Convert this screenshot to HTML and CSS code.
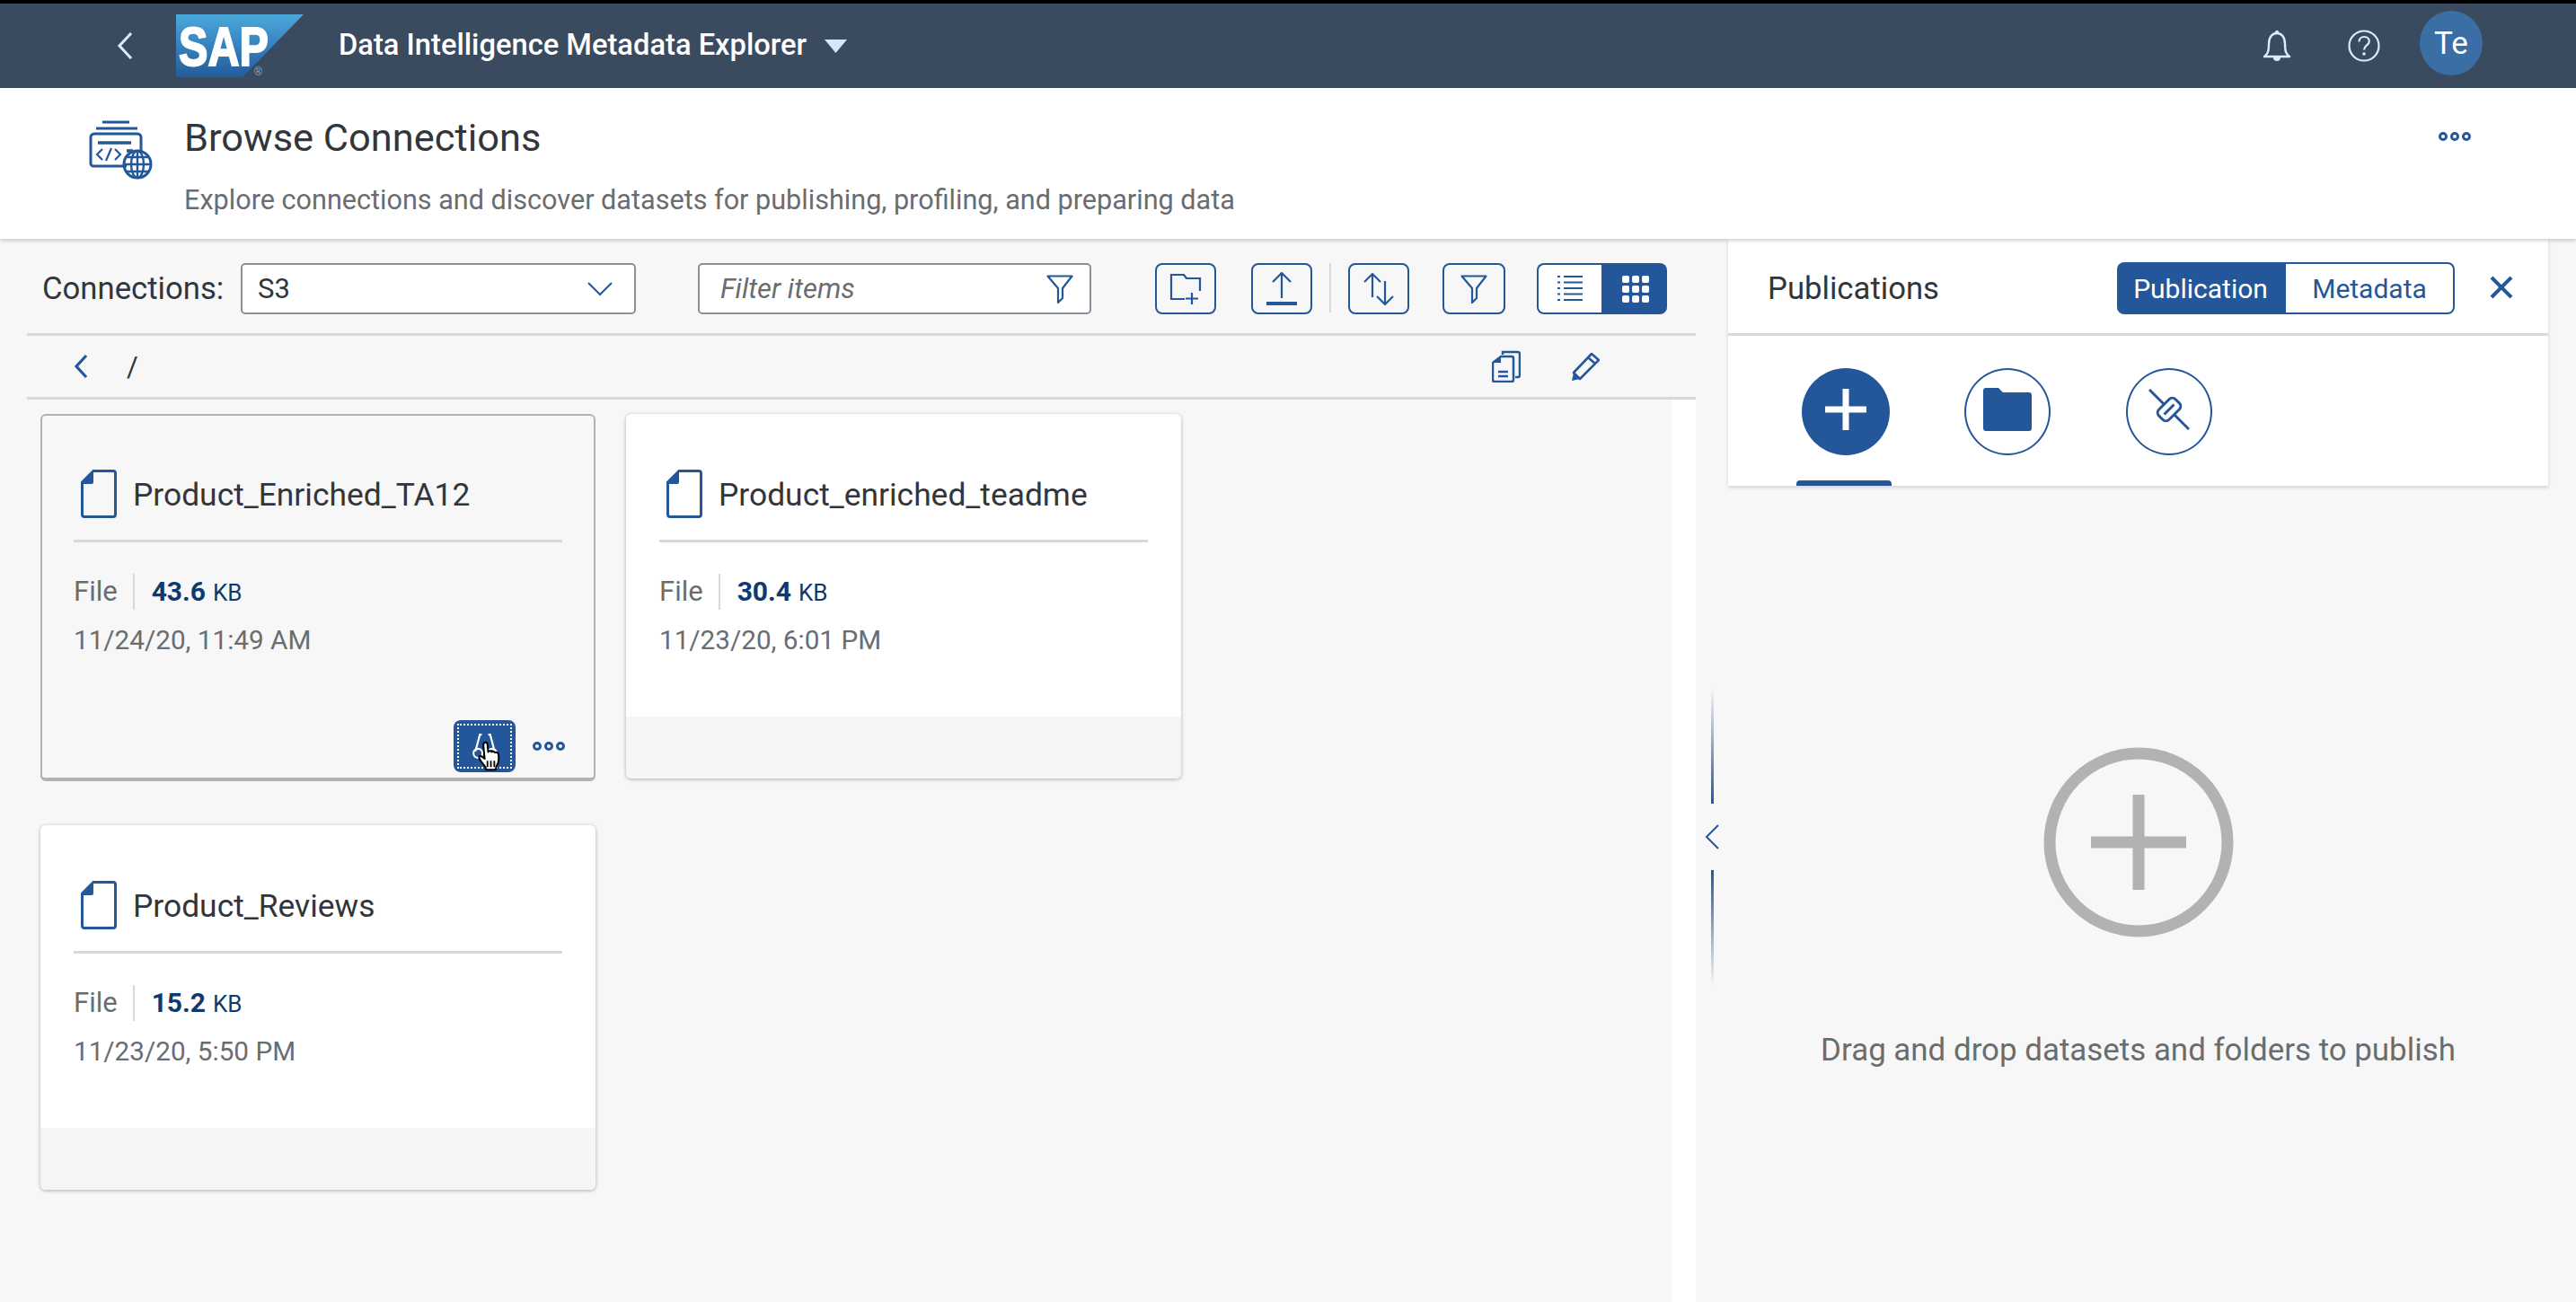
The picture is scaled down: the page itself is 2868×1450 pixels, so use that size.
FILE: index.html
```html
<!DOCTYPE html>
<html lang="en">
<head>
  <meta charset="UTF-8">
  <title>Browse Connections</title>
  <link rel="stylesheet" href="styles.css">
</head>
<body>
<header class="shell">
  <svg class="shell-back" width="18" height="30" viewBox="0 0 18 30"><path d="M16 1 3 15l13 14" fill="none" stroke="#dcecff" stroke-width="3"/></svg>
  <svg class="logo" width="142" height="70" viewBox="0 0 142 70">
    <defs>
      <linearGradient id="sapblue" x1="0" y1="0" x2="0" y2="1">
        <stop offset="0" stop-color="#4aa9dc"/>
        <stop offset="1" stop-color="#235b9c"/>
      </linearGradient>
    </defs>
    <polygon points="0,0 142,0 74,70 0,70" fill="url(#sapblue)"/>
    <text class="logo-text" x="3" y="57" textLength="100" lengthAdjust="spacingAndGlyphs">SAP</text>
    <text class="logo-mark" x="87" y="68">®</text>
  </svg>
  <span class="shell-title">Data Intelligence Metadata Explorer</span>
  <svg class="shell-caret" width="25" height="15" viewBox="0 0 25 15"><polygon points="0,0 25,0 12.5,15" fill="#d1e8ff"/></svg>
  <span class="shell-spacer"></span>
  <svg class="shell-icon" width="32" height="36" viewBox="0 0 32 36"><path d="M2 30c4-3 5-6 5-14C7 8 11 4 16 4s9 4 9 12c0 8 1 11 5 14z" fill="none" stroke="#dcecff" stroke-width="2.4" stroke-linejoin="round"/><circle cx="16" cy="2.8" r="2" fill="#dcecff"/><path d="M12 31h8a4 4 0 0 1-8 0z" fill="#dcecff"/></svg>
  <svg class="shell-icon help" width="36" height="36" viewBox="0 0 36 36"><circle cx="18" cy="18" r="16.5" fill="none" stroke="#dcecff" stroke-width="2.2"/><path d="M12.500 13.500c0-3.500 2.500-5.500 5.700-5.500 3.300 0 5.600 2 5.600 4.900 0 4.600-5.800 4.500-5.800 9.600" fill="none" stroke="#dcecff" stroke-width="2.200"/><circle cx="18" cy="27" r="1.800" fill="#dcecff"/></svg>
  <span class="avatar">Te</span>
</header>

<section class="title-bar">
  <svg class="title-icon" width="72" height="66" viewBox="0 0 72 66">
    <g fill="none" stroke="#235799" stroke-width="3">
      <path d="M15 2h30M8 9h46"/>
      <path d="M42 51H5a3 3 0 0 1-3-3V19a4 4 0 0 1 4-4h48a4 4 0 0 1 4 4v17"/>
      <path d="M10 25h37" stroke-width="3.600"/>
      <path d="M42 34h7" stroke-width="3.600"/>
      <path d="M15 32l-6 6 6 6M29 32l6 6-6 6M25 31l-6 14" stroke-width="2.200"/>
      <circle cx="54" cy="49" r="15"/>
      <ellipse cx="54" cy="49" rx="7" ry="15" stroke-width="2.400"/>
      <path d="M39 49h30M42 41h24M42 57h24M54 34v30" stroke-width="2.400"/>
    </g>
  </svg>
  <div class="title-text">
    <h1>Browse Connections</h1>
    <p>Explore connections and discover datasets for publishing, profiling, and preparing data</p>
  </div>
  <span class="dots title-dots"><i></i><i></i><i></i></span>
</section>

<main class="content">
  <section class="browser">
    <div class="toolbar">
      <label class="conn-label">Connections:</label>
      <div class="field conn-select">
        <span>S3</span>
        <svg width="28" height="16" viewBox="0 0 28 16"><path d="M1 1l13 13L27 1" fill="none" stroke="#235799" stroke-width="2"/></svg>
      </div>
      <div class="field filter">
        <span>Filter items</span>
        <svg width="30" height="32" viewBox="0 0 30 32"><path d="M1.500 1.500h27L18 15v11l-5 5V15z" fill="none" stroke="#235799" stroke-width="2.200" stroke-linejoin="round"/></svg>
      </div>
      <button class="tool first">
        <svg width="36" height="36" viewBox="0 0 36 36"><path d="M17 29H2V2h14l3 4h15v14M25 22v13M18 28.500h14" fill="none" stroke="#235799" stroke-width="2.200"/></svg>
      </button>
      <button class="tool">
        <svg width="36" height="38" viewBox="0 0 36 38"><path d="M18 29V2M8 11l10-10 10 10" fill="none" stroke="#235799" stroke-width="2.200"/><path d="M1 35h34" stroke="#235799" stroke-width="4"/></svg>
      </button>
      <span class="tool-sep"></span>
      <button class="tool">
        <svg width="38" height="38" viewBox="0 0 38 38"><path d="M12 28V2M3 11l9-9 9 9M26 10v26M17 27l9 9 9-9" fill="none" stroke="#235799" stroke-width="2.200"/></svg>
      </button>
      <button class="tool last">
        <svg width="30" height="32" viewBox="0 0 30 32"><path d="M1.500 1.500h27L18 15v11l-5 5V15z" fill="none" stroke="#235799" stroke-width="2.200" stroke-linejoin="round"/></svg>
      </button>
      <div class="view-switch">
        <button class="view-btn">
          <svg width="30" height="32" viewBox="0 0 30 32"><path d="M8 2h21M8 8.500h21M8 15h21M8 21.500h21M8 28h21" stroke="#235799" stroke-width="2.200"/><path d="M1 2h3M1 8.500h3M1 15h3M1 21.500h3M1 28h3" stroke="#235799" stroke-width="2"/></svg>
        </button>
        <button class="view-btn on">
          <svg width="30" height="30" viewBox="0 0 30 30" fill="#fff"><rect x="0" y="0" width="8" height="8" rx="2"/><rect x="11" y="0" width="8" height="8" rx="2"/><rect x="22" y="0" width="8" height="8" rx="2"/><rect x="0" y="11" width="8" height="8" rx="2"/><rect x="11" y="11" width="8" height="8" rx="2"/><rect x="22" y="11" width="8" height="8" rx="2"/><rect x="0" y="22" width="8" height="8" rx="2"/><rect x="11" y="22" width="8" height="8" rx="2"/><rect x="22" y="22" width="8" height="8" rx="2"/></svg>
        </button>
      </div>
    </div>

    <div class="crumbs">
      <svg width="16" height="28" viewBox="0 0 16 28"><path d="M14 2 3 14l11 12" fill="none" stroke="#235799" stroke-width="3.200"/></svg>
      <span class="crumb-path">/</span>
      <span class="shell-spacer"></span>
      <svg class="crumb-copy" width="32" height="36" viewBox="0 0 32 36"><g fill="none" stroke="#235799" stroke-width="2.500"><path d="M12 5V2h17a2 2 0 0 1 2 2v24a2 2 0 0 1-2 2h-3"/><path d="M10 7h12a2 2 0 0 1 2 2v24a2 2 0 0 1-2 2H3a2 2 0 0 1-2-2V14z"/><path d="M7 24h11M7 29h11"/></g><path d="M10 7v7H1z" fill="#235799"/></svg>
      <svg class="crumb-edit" width="32" height="34" viewBox="0 0 32 34"><path d="M3 24 23 3l8 7-21 21z" fill="none" stroke="#235799" stroke-width="2.600" stroke-linejoin="round"/><path d="M1 33l2-9 7 7z" fill="#235799"/><path d="M19 7l8 7" stroke="#235799" stroke-width="2.600"/></svg>
    </div>

    <div class="scroller">
      <div class="cards">
        <article class="card focused">
          <div class="card-head">
            <svg class="file-icon" width="40" height="54" viewBox="0 0 40 54"><path d="M14 1.500h22a2.500 2.500 0 0 1 2.500 2.500v46a2.500 2.500 0 0 1-2.500 2.500H4A2.500 2.500 0 0 1 1.500 50V14z" fill="none" stroke="#235799" stroke-width="3"/><path d="M14 1.500V14a2 2 0 0 1-2 2H1.500z" fill="#235799"/></svg>
            <h2>Product_Enriched_TA12</h2>
          </div>
          <div class="card-info">
            <div class="card-meta"><span class="kind">File</span><b>43.6</b><small>KB</small></div>
            <div class="card-date">11/24/20, 11:49 AM</div>
          </div>
          <div class="card-foot">
            <span class="shell-spacer"></span>
            <button class="card-action">
              <span class="focus-ring"></span>
              <svg width="30" height="32" viewBox="0 0 42 44"><g fill="none" stroke="#fff" stroke-width="3"><path d="M6 30 13 4h3M36 30 29 4h-3"/><circle cx="10" cy="33" r="7"/><circle cx="32" cy="33" r="7"/></g></svg>
              <svg class="hand" width="26" height="34" viewBox="0 0 34 44"><path d="M9 3c2-2 5-1 5 2l1 11c1-2 4-2 5 0 1-1 4-1 5 1 2-1 5 0 5 3 1 6 0 13-3 17l-1 5H12l-1-4C8 33 3 29 2 25c-1-3 2-4 4-2l4 3L8 6c0-1 0-2 1-3z" fill="#fff" stroke="#000" stroke-width="2.600" stroke-linejoin="round"/><path d="M14 29v9M19 29v9M24 29v9" stroke="#000" stroke-width="2.400"/></svg>
            </button>
            <span class="dots"><i></i><i></i><i></i></span>
          </div>
        </article>

        <article class="card">
          <div class="card-head">
            <svg class="file-icon" width="40" height="54" viewBox="0 0 40 54"><path d="M14 1.500h22a2.500 2.500 0 0 1 2.500 2.500v46a2.500 2.500 0 0 1-2.500 2.500H4A2.500 2.500 0 0 1 1.500 50V14z" fill="none" stroke="#235799" stroke-width="3"/><path d="M14 1.500V14a2 2 0 0 1-2 2H1.500z" fill="#235799"/></svg>
            <h2>Product_enriched_teadme</h2>
          </div>
          <div class="card-info">
            <div class="card-meta"><span class="kind">File</span><b>30.4</b><small>KB</small></div>
            <div class="card-date">11/23/20, 6:01 PM</div>
          </div>
          <div class="card-foot"></div>
        </article>

        <article class="card">
          <div class="card-head">
            <svg class="file-icon" width="40" height="54" viewBox="0 0 40 54"><path d="M14 1.500h22a2.500 2.500 0 0 1 2.500 2.500v46a2.500 2.500 0 0 1-2.500 2.500H4A2.500 2.500 0 0 1 1.500 50V14z" fill="none" stroke="#235799" stroke-width="3"/><path d="M14 1.500V14a2 2 0 0 1-2 2H1.500z" fill="#235799"/></svg>
            <h2>Product_Reviews</h2>
          </div>
          <div class="card-info">
            <div class="card-meta"><span class="kind">File</span><b>15.2</b><small>KB</small></div>
            <div class="card-date">11/23/20, 5:50 PM</div>
          </div>
          <div class="card-foot"></div>
        </article>
      </div>
      <div class="scroll-track"></div>
    </div>
  </section>

  <div class="splitter">
    <span class="grip grip-top"></span>
    <svg width="16" height="28" viewBox="0 0 16 28"><path d="M15 1 2 14l13 13" fill="none" stroke="#235799" stroke-width="2"/></svg>
    <span class="grip grip-bottom"></span>
  </div>

  <aside class="panel">
    <div class="panel-top">
      <div class="panel-head">
        <span class="panel-title">Publications</span>
        <span class="shell-spacer"></span>
        <div class="segments">
          <button class="segment on">Publication</button>
          <button class="segment">Metadata</button>
        </div>
        <svg class="panel-close" width="26" height="26" viewBox="0 0 26 26"><path d="M2 2l22 22M24 2 2 24" fill="none" stroke="#235799" stroke-width="4"/></svg>
      </div>
      <div class="panel-tabs">
        <div class="round-tab active">
          <span class="round solid">
            <svg width="46" height="46" viewBox="0 0 46 46"><path d="M23 0v46M0 23h46" stroke="#fff" stroke-width="7"/></svg>
          </span>
        </div>
        <div class="round-tab">
          <span class="round">
            <svg width="54" height="48" viewBox="0 0 54 48"><path d="M3 0h14l5 5h29a3 3 0 0 1 3 3v37a3 3 0 0 1-3 3H3a3 3 0 0 1-3-3V3a3 3 0 0 1 3-3z" fill="#235799"/></svg>
          </span>
        </div>
        <div class="round-tab">
          <span class="round">
            <svg width="46" height="48" viewBox="0 0 46 48"><g fill="none" stroke="#235799" stroke-width="3"><path d="M1 2l16.300 16.300M28.700 29.700 45 46"/><rect x="10" y="16" width="26" height="16" rx="5" transform="rotate(-45 23 24)"/><path d="M17.500 29.500l11-11"/></g></svg>
          </span>
        </div>
      </div>
    </div>
    <div class="empty">
      <svg width="212" height="212" viewBox="0 0 212 212"><circle cx="106" cy="106" r="99" fill="none" stroke="#b0b2b4" stroke-width="13"/><path d="M106 53v106M53 106h106" stroke="#b0b2b4" stroke-width="13"/></svg>
      <p>Drag and drop datasets and folders to publish</p>
    </div>
  </aside>
</main>
</body>
</html>
```

FILE: styles.css
```css
* {
  box-sizing: border-box;
}
html, body {
  height: 100%;
}
body {
  margin: 0;
  display: flex;
  flex-direction: column;
  overflow: hidden;
  font-family: Roboto, Arial, sans-serif;
  color: #32363a;
  background-color: #f7f7f7;
}
svg {
  display: block;
  flex: none;
}
button {
  font-family: inherit;
  padding: 0;
  cursor: pointer;
}
.shell-spacer {
  flex: 1;
}

/* shell bar */
.shell {
  height: 98px;
  border-top: 4px solid #000;
  background-color: #3a4a5f;
  display: flex;
  align-items: center;
  padding-left: 130px;
  flex: none;
}
.logo {
  margin-left: 48px;
}
.logo-text {
  font-family: "Liberation Sans", Arial, sans-serif;
  font-weight: 700;
  font-size: 62px;
  fill: #fff;
  stroke: #fff;
  stroke-width: 2px;
}
.logo-mark {
  font-family: "Liberation Sans", Arial, sans-serif;
  font-size: 12px;
  fill: #8fb4d8;
}
.shell-title {
  margin-left: 39px;
  margin-top: -3px;
  font-size: 32.7px;
  font-weight: 500;
  color: #fff;
}
.shell-caret {
  margin-left: 20px;
}
.shell-icon {
  margin-right: 63px;
}
.shell-icon.help {
  margin-right: 44px;
}
.avatar {
  width: 70px;
  height: 72px;
  margin-right: 104px;
  margin-top: -6px;
  border-radius: 50%;
  background-color: #3a6ea5;
  color: #fff;
  font-size: 35px;
  display: flex;
  align-items: center;
  justify-content: center;
}

/* title bar */
.title-bar {
  height: 168px;
  background-color: #fff;
  box-shadow: 0 2px 4px rgba(0, 0, 0, 0.18);
  display: flex;
  align-items: flex-start;
  padding: 36px 117px 0 99px;
  position: relative;
  flex: none;
}
.title-icon {
  margin-right: 34px;
}
.title-text h1 {
  margin: -6px 0 0;
  font-size: 43.4px;
  line-height: 52px;
  font-weight: 400;
}
.title-text p {
  margin: 23px 0 0;
  font-size: 30.6px;
  line-height: 40px;
  color: #6a6d70;
}
.dots {
  display: flex;
  gap: 3px;
}
.dots i {
  width: 10px;
  height: 10px;
  border: 3px solid #235799;
  border-radius: 50%;
}
.title-dots {
  margin-left: auto;
  margin-top: 13px;
}

/* main area */
.content {
  flex: 1;
  display: flex;
  min-height: 0;
}
.browser {
  width: 1888px;
  padding-left: 30px;
  display: flex;
  flex-direction: column;
}
.toolbar {
  height: 108px;
  padding-top: 27px;
  border-bottom: 3px solid #d9d9d9;
  display: flex;
  align-items: flex-start;
  flex: none;
}
.conn-label {
  margin-left: 17px;
  width: 221px;
  line-height: 56px;
  font-size: 34.7px;
}
.field {
  height: 57px;
  background-color: #fff;
  border: 2px solid #89919a;
  border-radius: 5px;
  display: flex;
  align-items: center;
  justify-content: space-between;
  font-size: 31px;
}
.conn-select {
  width: 440px;
  padding: 0 24px 0 17px;
}
.filter {
  width: 438px;
  margin-left: 69px;
  padding: 0 18px 0 23px;
  font-style: italic;
  color: #6a6d70;
}
.tool {
  width: 68px;
  height: 57px;
  margin-left: 39px;
  background-color: transparent;
  border: 2px solid #235799;
  border-radius: 8px;
  display: flex;
  align-items: center;
  justify-content: center;
}
.tool.first {
  margin-left: 71px;
}
.tool.last {
  width: 70px;
  margin-left: 37px;
}
.tool-sep {
  width: 2px;
  height: 55px;
  margin-left: 19px;
  margin-right: -20px;
  background-color: #d9d9d9;
}
.view-switch {
  margin-left: 35px;
  display: flex;
}
.view-btn {
  width: 72px;
  height: 57px;
  background-color: #fff;
  border: 2px solid #235799;
  border-right: 0;
  border-radius: 8px 0 0 8px;
  display: flex;
  align-items: center;
  justify-content: center;
}
.view-btn.on {
  width: 73px;
  background-color: #235799;
  border-radius: 0 8px 8px 0;
}
.crumbs {
  height: 71px;
  border-bottom: 3px solid #d9d9d9;
  display: flex;
  align-items: center;
  padding: 0 0 0 52px;
  flex: none;
}
.crumb-path {
  margin-left: 43px;
  font-size: 31px;
}
.crumb-copy {
  margin-right: 56px;
}
.crumb-edit {
  margin-right: 107px;
}
.scroller {
  flex: 1;
  display: flex;
  min-height: 0;
}
.scroll-track {
  width: 26px;
  background-color: #fff;
}
.cards {
  flex: 1;
  padding: 16px 0 0 15px;
  display: grid;
  grid-template-columns: repeat(auto-fill, 618px);
  grid-auto-rows: 409px;
  gap: 49px 34px;
}

/* cards */
.card {
  height: 406px;
  background-color: #fff;
  border-radius: 6px;
  box-shadow: 0 1px 4px rgba(0, 0, 0, 0.3);
  display: flex;
  flex-direction: column;
  overflow: hidden;
}
.card.focused {
  height: 409px;
  background-color: #f7f7f7;
  border: 2px solid #b0b2b4;
  border-bottom-width: 4px;
  box-shadow: none;
}
.card-head {
  height: 143px;
  margin: 0 37px;
  padding-top: 62px;
  padding-left: 8px;
  border-bottom: 3px solid #d9d9d9;
  display: flex;
  align-items: flex-start;
  flex: none;
}
.focused .card-head {
  margin: 0 35px;
  padding-top: 60px;
  height: 141px;
}
.card-head h2 {
  margin: 1px 0 0 18px;
  font-size: 35.4px;
  line-height: 54px;
  font-weight: 400;
}
.card-info {
  flex: 1;
  padding: 35px 37px 0;
  font-size: 31px;
  color: #6a6d70;
}
.focused .card-info {
  padding: 35px 35px 0;
}
.card-meta {
  display: flex;
  align-items: baseline;
  line-height: 40px;
}
.kind {
  padding-right: 17px;
  margin-right: 19px;
  border-right: 2px solid #d9d9d9;
}
.card-meta b {
  color: #0f3a70;
  font-size: 30px;
}
.card-meta small {
  margin-left: 8px;
  color: #0f3a70;
  font-size: 26px;
}
.card-date {
  margin-top: 13px;
  font-size: 29.7px;
  line-height: 40px;
}
.card-foot {
  height: 69px;
  background-color: #f5f5f5;
  display: flex;
  align-items: center;
  padding-right: 34px;
  flex: none;
}
.focused .card-foot {
  height: 65px;
  padding-right: 32px;
  padding-bottom: 6px;
  background-color: transparent;
}
.card-action {
  width: 69px;
  height: 58px;
  margin-right: 19px;
  border: 0;
  border-radius: 8px;
  background-color: #235799;
  position: relative;
  display: flex;
  align-items: center;
  justify-content: center;
}
.focus-ring {
  position: absolute;
  inset: 4px;
  border: 2px dotted #fff;
}
.hand {
  position: absolute;
  left: 27px;
  top: 23px;
}

/* publications panel */
.splitter {
  width: 36px;
  padding-top: 499px;
  display: flex;
  flex-direction: column;
  align-items: center;
}
.splitter svg {
  margin: 23px 0;
}
.grip {
  width: 3px;
  height: 130px;
}
.grip-top {
  background: linear-gradient(to bottom, rgba(35, 87, 153, 0), #235799);
}
.grip-bottom {
  background: linear-gradient(to top, rgba(35, 87, 153, 0), #235799);
}
.panel {
  width: 913px;
  display: flex;
  flex-direction: column;
  flex: none;
}
.panel-top {
  height: 275px;
  background-color: #fff;
  box-shadow: 0 2px 4px rgba(0, 0, 0, 0.15);
  flex: none;
}
.panel-head {
  height: 108px;
  padding: 27px 39px 0 44px;
  border-bottom: 3px solid #d9d9d9;
  display: flex;
  align-items: flex-start;
}
.panel-title {
  font-size: 34.7px;
  line-height: 56px;
}
.segments {
  display: flex;
  margin-top: -1px;
}
.segment {
  width: 188px;
  height: 58px;
  background-color: #fff;
  border: 2px solid #235799;
  border-left: 0;
  border-radius: 0 8px 8px 0;
  color: #235799;
  font-size: 30px;
}
.segment.on {
  background-color: #235799;
  border-radius: 8px 0 0 8px;
  color: #fff;
}
.panel-close {
  margin: 14px 0 0 39px;
}
.panel-tabs {
  display: flex;
  gap: 74px;
  padding-left: 76px;
}
.round-tab {
  width: 106px;
  height: 167px;
  padding: 36px 0 0 4px;
  display: flex;
  justify-content: center;
  position: relative;
}
.round-tab.active::after {
  content: "";
  position: absolute;
  left: 0;
  right: 0;
  bottom: 0;
  height: 6px;
  border-radius: 4px 4px 0 0;
  background-color: #235799;
}
.round {
  width: 96px;
  height: 97px;
  border: 2px solid #235799;
  border-radius: 50%;
  display: flex;
  align-items: center;
  justify-content: center;
}
.round svg {
  margin-top: -6px;
}
.round.solid {
  width: 98px;
  background-color: #235799;
}
.empty {
  flex: 1;
  padding-top: 291px;
  display: flex;
  flex-direction: column;
  align-items: center;
}
.empty p {
  margin: 104px 0 0;
  font-size: 34.9px;
  line-height: 44px;
  color: #6a6d70;
}
```
